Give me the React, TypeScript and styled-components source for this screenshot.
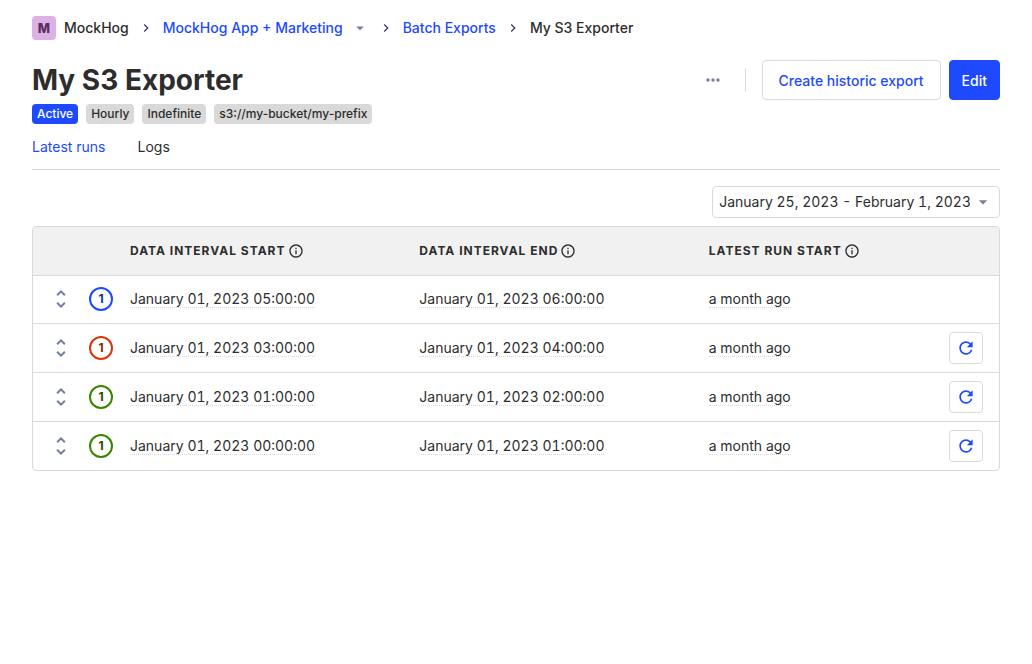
import React from "react";
import styled, { createGlobalStyle } from "styled-components";
import {
  MdArrowDropDown,
  MdChevronRight,
  MdInfoOutline,
  MdMoreHoriz,
  MdRefresh,
  MdUnfoldMore,
} from "react-icons/md";

const color = {
  text: "#2d2d2d",
  primary: "#1d4aff",
  muted: "#747ea1",
  chevron: "#35416b",
  border: "#d9d9d9",
  headerBg: "#f1f1f1",
  danger: "#db3707",
  success: "#388600",
};

const GlobalStyle = createGlobalStyle`
  *, *::before, *::after { box-sizing: border-box; }
  body {
    margin: 0;
    background: #fff;
    color: ${color.text};
    font-family: Inter, "Liberation Sans", sans-serif;
    font-size: 14px;
    line-height: 20px;
  }
  button { font: inherit; cursor: pointer; }
  svg { display: block; flex-shrink: 0; }
`;

const Page = styled.main`
  padding: 16px 32px;
`;

const Breadcrumbs = styled.nav`
  display: flex;
  align-items: center;
  gap: 9px;
  height: 24px;
  font-weight: 500;
  white-space: nowrap;
`;

const Crumb = styled.div`
  display: flex;
  align-items: center;
  gap: 8px;
`;

const CrumbLink = styled.a`
  color: ${color.primary};
  text-decoration: none;
`;

const ProjectSwitch = styled.button`
  display: flex;
  padding: 0;
  border: 0;
  background: none;
  color: ${color.muted};
`;

const Lettermark = styled.span`
  display: flex;
  align-items: center;
  justify-content: center;
  width: 24px;
  height: 24px;
  border-radius: 4px;
  background: #dcb1e3;
  color: #572e5e;
  font-size: 13px;
  font-weight: 800;
`;

const Header = styled.header`
  display: flex;
  align-items: center;
  justify-content: space-between;
  gap: 16px;
  margin-top: 20px;
`;

const Title = styled.h1`
  margin: 0;
  font-size: 28px;
  line-height: 40px;
  font-weight: 700;
`;

const Actions = styled.div`
  display: flex;
  align-items: center;
  gap: 8px;
`;

const MoreButton = styled.button`
  display: flex;
  align-items: center;
  justify-content: center;
  width: 40px;
  height: 40px;
  padding: 0;
  border: 0;
  background: none;
  color: ${color.muted};
`;

const Divider = styled.span`
  width: 1px;
  height: 24px;
  margin: 0 8px 0 4px;
  background: ${color.border};
`;

const Button = styled.button<{ $primary?: boolean }>`
  height: 40px;
  padding: 2px ${(p) => (p.$primary ? 12 : 16)}px 0;
  border: 1px solid ${(p) => (p.$primary ? color.primary : color.border)};
  border-radius: 4px;
  background: ${(p) => (p.$primary ? color.primary : "#fff")};
  color: ${(p) => (p.$primary ? "#fff" : color.primary)};
  font-weight: 500;
  white-space: nowrap;
`;

const Tags = styled.div`
  display: flex;
  flex-wrap: wrap;
  gap: 8px;
  margin-top: 4px;
`;

const Tag = styled.span<{ $active?: boolean }>`
  padding: 0 5px;
  border-radius: 4px;
  background: ${(p) => (p.$active ? color.primary : color.border)};
  color: ${(p) => (p.$active ? "#fff" : color.text)};
  font-size: 12px;
  font-weight: 500;
`;

const Tabs = styled.div`
  display: flex;
  gap: 32px;
  border-bottom: 1px solid ${color.border};
`;

const Tab = styled.button<{ $active?: boolean }>`
  padding: 13px 0 12px;
  border: 0;
  background: none;
  color: ${(p) => (p.$active ? color.primary : color.text)};
`;

const Filters = styled.div`
  display: flex;
  justify-content: flex-end;
  margin: 16px 0 8px;
`;

const DateButton = styled.button`
  display: flex;
  align-items: center;
  gap: 2px;
  height: 32px;
  padding: 0 6px;
  border: 1px solid ${color.border};
  border-radius: 4px;
  background: #fff;
  color: ${color.text};
  font-variant-numeric: tabular-nums;

  svg { color: ${color.muted}; }
`;

const TableFrame = styled.div`
  overflow: hidden;
  border: 1px solid ${color.border};
  border-radius: 4px;
`;

const Table = styled.table`
  width: 100%;
  border-collapse: separate;
  border-spacing: 0;

  th {
    height: 48px;
    padding: 0 0 0 16px;
    background: ${color.headerBg};
    font-size: 12px;
    font-weight: 700;
    letter-spacing: 1px;
    text-align: left;
    text-transform: uppercase;
    white-space: nowrap;
  }

  td {
    height: 49px;
    padding: 0 0 0 16px;
    border-top: 1px solid ${color.border};
    white-space: nowrap;
  }

  tbody tr:first-child td {
    height: 48px;
    padding-bottom: 1px;
  }
`;

const ToggleCol = styled.col`
  width: 56px;
`;

const CountCol = styled.col`
  width: 25px;
`;

const ActionCol = styled.col`
  width: 66px;
`;

const HeadLabel = styled.span`
  display: flex;
  align-items: center;
  gap: 2px;
`;

const ToggleButton = styled.button`
  display: flex;
  padding: 0;
  border: 0;
  background: none;
  color: ${color.muted};
`;

const CountCell = styled.td`
  && { padding-left: 0; }
`;

const Count = styled.span<{ $color: string; $ink: string }>`
  display: flex;
  align-items: center;
  justify-content: center;
  width: 24px;
  height: 24px;
  border: 2px solid ${(p) => p.$color};
  border-radius: 50%;
  color: ${(p) => p.$ink};
  font-size: 12px;
  font-weight: 700;
`;

const Time = styled.span`
  display: inline-block;
  border-bottom: 1px dotted ${color.border};
  line-height: 17px;
  font-variant-numeric: tabular-nums;
`;

const RetryButton = styled.button`
  display: flex;
  align-items: center;
  justify-content: center;
  width: 34px;
  height: 32px;
  padding: 0;
  border: 1px solid ${color.border};
  border-radius: 4px;
  background: #fff;
  color: ${color.primary};
`;

type Status = "running" | "failed" | "completed";

const statusColors: Record<Status, [string, string]> = {
  running: [color.primary, "#132f9e"],
  failed: [color.danger, "#8a2305"],
  completed: [color.success, "#1f4a00"],
};

const runs: { status: Status; start: string; end: string }[] = [
  { status: "running", start: "January 01, 2023 05:00:00", end: "January 01, 2023 06:00:00" },
  { status: "failed", start: "January 01, 2023 03:00:00", end: "January 01, 2023 04:00:00" },
  { status: "completed", start: "January 01, 2023 01:00:00", end: "January 01, 2023 02:00:00" },
  { status: "completed", start: "January 01, 2023 00:00:00", end: "January 01, 2023 01:00:00" },
];

const columns = ["Data interval start", "Data interval end", "Latest run start"];

const Separator = () => <MdChevronRight size={16} color={color.chevron} />;

export default function App() {
  return (
    <>
      <GlobalStyle />
      <Page>
        <Breadcrumbs aria-label="Breadcrumb">
          <Crumb>
            <Lettermark>M</Lettermark>
            <span>MockHog</span>
          </Crumb>
          <Separator />
          <Crumb>
            <CrumbLink href="#project">MockHog App + Marketing</CrumbLink>
            <ProjectSwitch aria-label="Switch project">
              <MdArrowDropDown size={18} />
            </ProjectSwitch>
          </Crumb>
          <Separator />
          <CrumbLink href="#exports">Batch Exports</CrumbLink>
          <Separator />
          <span>My S3 Exporter</span>
        </Breadcrumbs>

        <Header>
          <Title>My S3 Exporter</Title>
          <Actions>
            <MoreButton aria-label="More">
              <MdMoreHoriz size={20} />
            </MoreButton>
            <Divider />
            <Button>Create historic export</Button>
            <Button $primary>Edit</Button>
          </Actions>
        </Header>

        <Tags>
          <Tag $active>Active</Tag>
          <Tag>Hourly</Tag>
          <Tag>Indefinite</Tag>
          <Tag>s3://my-bucket/my-prefix</Tag>
        </Tags>

        <Tabs role="tablist">
          <Tab role="tab" aria-selected $active>Latest runs</Tab>
          <Tab role="tab" aria-selected={false}>Logs</Tab>
        </Tabs>

        <Filters>
          <DateButton>
            January 25, 2023 - February 1, 2023
            <MdArrowDropDown size={20} />
          </DateButton>
        </Filters>

        <TableFrame>
          <Table>
            <colgroup>
              <ToggleCol />
              <CountCol />
              <col />
              <col />
              <col />
              <ActionCol />
            </colgroup>
            <thead>
              <tr>
                <th />
                <th />
                {columns.map((label) => (
                  <th key={label} scope="col">
                    <HeadLabel>
                      {label}
                      <MdInfoOutline size={16} />
                    </HeadLabel>
                  </th>
                ))}
                <th />
              </tr>
            </thead>
            <tbody>
              {runs.map((run) => {
                const [ring, ink] = statusColors[run.status];
                return (
                  <tr key={run.start}>
                    <td>
                      <ToggleButton aria-label="Show runs">
                        <MdUnfoldMore size={24} />
                      </ToggleButton>
                    </td>
                    <CountCell>
                      <Count $color={ring} $ink={ink}>1</Count>
                    </CountCell>
                    <td><Time>{run.start}</Time></td>
                    <td><Time>{run.end}</Time></td>
                    <td><Time>a month ago</Time></td>
                    <td>
                      {run.status !== "running" && (
                        <RetryButton aria-label="Retry run">
                          <MdRefresh size={20} />
                        </RetryButton>
                      )}
                    </td>
                  </tr>
                );
              })}
            </tbody>
          </Table>
        </TableFrame>
      </Page>
    </>
  );
}
